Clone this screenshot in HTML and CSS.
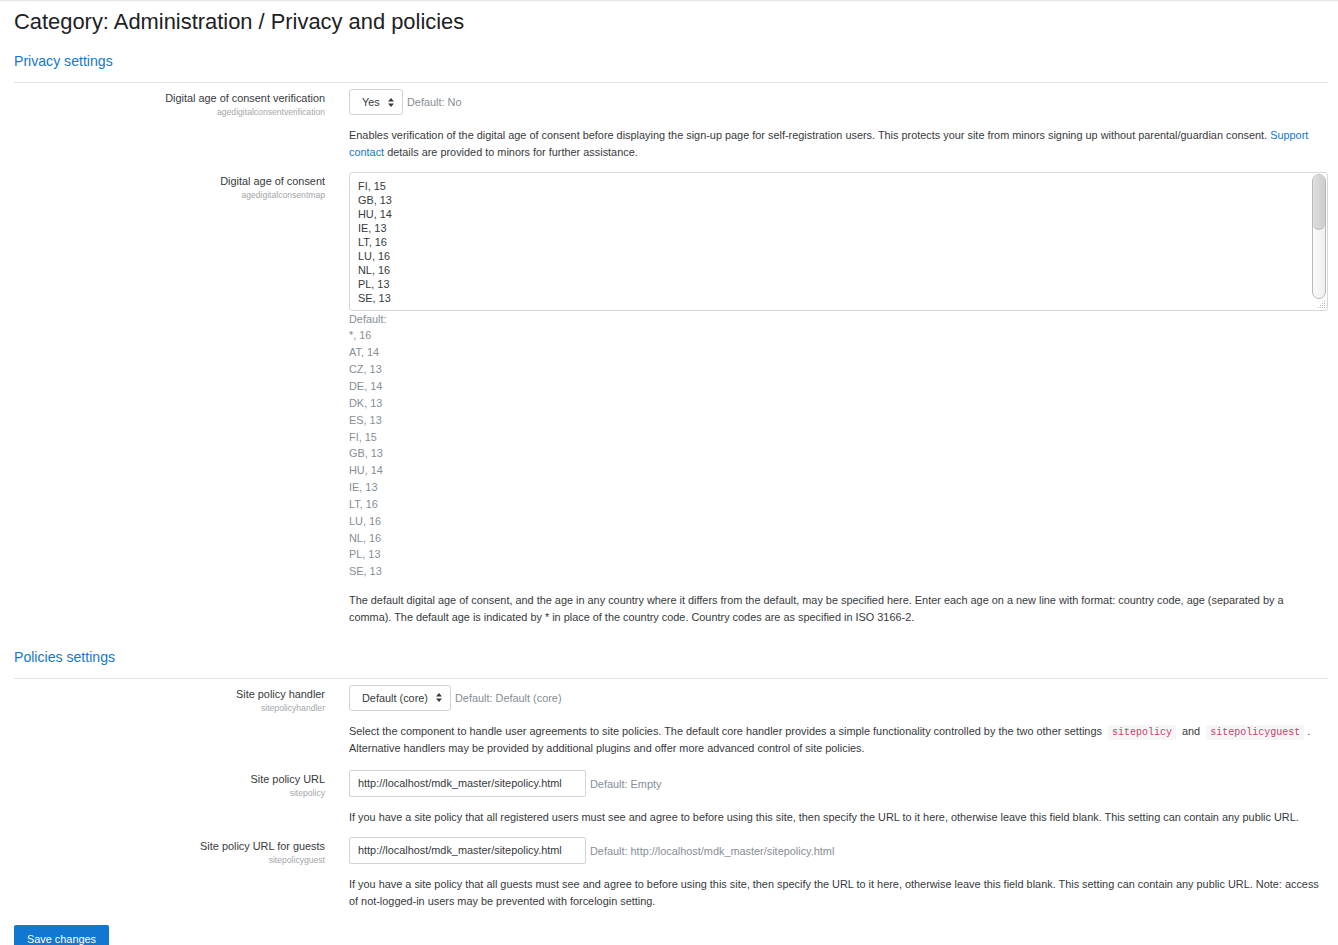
FILE: index.html
```html
<!DOCTYPE html>
<html lang="en">
<head>
    <meta charset="UTF-8">
    <title>Category: Administration / Privacy and policies</title>
    <link rel="stylesheet" href="styles.css">
</head>
<body>
    <div class="page">
        <h2 class="page-title">Category: Administration / Privacy and policies</h2>

        <section class="settings-group">
            <h3 class="group-title">Privacy settings</h3>

            <div class="setting">
                <div class="setting-label">
                    <label>Digital age of consent verification</label>
                    <span class="setting-name">agedigitalconsentverification</span>
                </div>
                <div class="setting-control">
                    <div class="control-line">
                        <div class="select select-yes">Yes
                            <svg class="caret" width="6" height="9" viewBox="0 0 6 9"><path d="M3 0 L6 3.5 H0 Z M3 9 L0 5.5 H6 Z" fill="#373a3c"/></svg>
                        </div>
                        <span class="default">Default: No</span>
                    </div>
                    <p class="description">Enables verification of the digital age of consent before displaying the sign-up page for self-registration users. This protects your site from minors signing up without parental/guardian consent. <a href="#">Support contact</a> details are provided to minors for further assistance.</p>
                </div>
            </div>

            <div class="setting">
                <div class="setting-label">
                    <label>Digital age of consent</label>
                    <span class="setting-name">agedigitalconsentmap</span>
                </div>
                <div class="setting-control">
                    <div class="textarea">
                        <div class="textarea-lines">FI, 15<br>GB, 13<br>HU, 14<br>IE, 13<br>LT, 16<br>LU, 16<br>NL, 16<br>PL, 13<br>SE, 13</div>
                        <div class="fake-scroll"><div class="fake-thumb"></div></div>
                        <svg class="grip" width="8" height="8" viewBox="0 0 8 8"><g fill="#bbb"><rect x="6" y="0" width="1" height="1"/><rect x="4" y="2" width="1" height="1"/><rect x="6" y="2" width="1" height="1"/><rect x="2" y="4" width="1" height="1"/><rect x="4" y="4" width="1" height="1"/><rect x="6" y="4" width="1" height="1"/><rect x="0" y="6" width="1" height="1"/><rect x="2" y="6" width="1" height="1"/><rect x="4" y="6" width="1" height="1"/><rect x="6" y="6" width="1" height="1"/></g></svg>
                    </div>
                    <div class="default default-list">Default:<br>*, 16<br>AT, 14<br>CZ, 13<br>DE, 14<br>DK, 13<br>ES, 13<br>FI, 15<br>GB, 13<br>HU, 14<br>IE, 13<br>LT, 16<br>LU, 16<br>NL, 16<br>PL, 13<br>SE, 13</div>
                    <p class="description">The default digital age of consent, and the age in any country where it differs from the default, may be specified here. Enter each age on a new line with format: country code, age (separated by a comma). The default age is indicated by * in place of the country code. Country codes are as specified in ISO 3166-2.</p>
                </div>
            </div>
        </section>

        <section class="settings-group">
            <h3 class="group-title">Policies settings</h3>

            <div class="setting">
                <div class="setting-label">
                    <label>Site policy handler</label>
                    <span class="setting-name">sitepolicyhandler</span>
                </div>
                <div class="setting-control">
                    <div class="control-line">
                        <div class="select select-core">Default (core)
                            <svg class="caret" width="6" height="9" viewBox="0 0 6 9"><path d="M3 0 L6 3.5 H0 Z M3 9 L0 5.5 H6 Z" fill="#373a3c"/></svg>
                        </div>
                        <span class="default">Default: Default (core)</span>
                    </div>
                    <p class="description">Select the component to handle user agreements to site policies. The default core handler provides a simple functionality controlled by the two other settings <code>sitepolicy</code> and <code>sitepolicyguest</code>. Alternative handlers may be provided by additional plugins and offer more advanced control of site policies.</p>
                </div>
            </div>

            <div class="setting setting-after-code">
                <div class="setting-label">
                    <label>Site policy URL</label>
                    <span class="setting-name">sitepolicy</span>
                </div>
                <div class="setting-control">
                    <div class="control-line">
                        <div class="input">http://localhost/mdk_master/sitepolicy.html</div>
                        <span class="default">Default: Empty</span>
                    </div>
                    <p class="description">If you have a site policy that all registered users must see and agree to before using this site, then specify the URL to it here, otherwise leave this field blank. This setting can contain any public URL.</p>
                </div>
            </div>

            <div class="setting">
                <div class="setting-label">
                    <label>Site policy URL for guests</label>
                    <span class="setting-name">sitepolicyguest</span>
                </div>
                <div class="setting-control">
                    <div class="control-line">
                        <div class="input">http://localhost/mdk_master/sitepolicy.html</div>
                        <span class="default">Default: http://localhost/mdk_master/sitepolicy.html</span>
                    </div>
                    <p class="description">If you have a site policy that all guests must see and agree to before using this site, then specify the URL to it here, otherwise leave this field blank. This setting can contain any public URL. Note: access of not-logged-in users may be prevented with forcelogin setting.</p>
                </div>
            </div>
        </section>

        <button class="save-button" type="submit">Save changes</button>
    </div>
</body>
</html>
```

FILE: styles.css
```css
body {
    font-family: "Liberation Sans", Arial, sans-serif;
    font-size: 10.9px;
    color: #373a3c;
    background-color: #fff;
    margin: 0;
    border-top: 1px solid #e5e5e5;
}
.page {
    padding: 0 10px 0 14px;
}
.page-title {
    font-size: 21.9px;
    font-weight: normal;
    color: #1d2125;
    line-height: 28px;
    margin: 7px 0 0;
}
.group-title {
    font-size: 14.1px;
    font-weight: normal;
    color: #1177d1;
    line-height: 20px;
    margin: 15px 0 0;
    padding-bottom: 11px;
    border-bottom: 1px solid #e3e3e3;
}
.settings-group + .settings-group .group-title {
    margin-top: 21px;
}
.setting {
    display: grid;
    grid-template-columns: 311px 1fr;
    column-gap: 24px;
    margin-top: 6px;
}
.setting + .setting {
    margin-top: 11px;
}
.setting + .setting-after-code {
    margin-top: 14px;
}
.setting-label {
    text-align: right;
    padding-top: 2px;
}
.setting-label label {
    display: block;
    line-height: 15px;
}
.setting-name {
    display: block;
    font-size: 8.6px;
    color: #a3a7ab;
    line-height: 13px;
}
.control-line {
    display: flex;
    align-items: center;
    gap: 4px;
}
.select {
    display: flex;
    align-items: center;
    justify-content: space-between;
    height: 24px;
    padding: 0 8px 0 12px;
    border: 1px solid #ced4da;
    border-radius: 3px;
    box-sizing: content-box;
}
.select-yes {
    width: 32px;
}
.select-core {
    width: 80px;
}
.input {
    width: 219px;
    height: 25px;
    line-height: 25px;
    padding: 0 8px;
    border: 1px solid #ced4da;
    border-radius: 2px;
}
.default {
    color: #868e96;
}
.description {
    margin: 12px 0 0;
    line-height: 16.8px;
    padding-right: 8px;
}
.description a {
    color: #1177d1;
    text-decoration: none;
}
code {
    font-family: "Liberation Mono", "DejaVu Sans Mono", monospace;
    font-size: 10px;
    line-height: 14px;
    color: #c9405d;
    background-color: #f6f6f8;
    border-radius: 3px;
    padding: 2px 4px;
    margin: 0 3px;
}
.textarea {
    position: relative;
    height: 137px;
    border: 1px solid #d5d8db;
    border-radius: 3px;
}
.textarea-lines {
    padding: 6px 8px 0;
    line-height: 14px;
}
.fake-scroll {
    position: absolute;
    top: 1px;
    right: 1px;
    width: 12px;
    height: 123px;
    border: 1px solid #b9b9b9;
    border-radius: 7px;
    background: linear-gradient(to right, #fafafa, #efefef);
    overflow: hidden;
}
.fake-thumb {
    height: 54px;
    background: linear-gradient(to right, #dedede, #cdcdcd);
    border-bottom: 1px solid #bcbcbc;
    border-radius: 6px 6px 7px 7px;
}
.grip {
    position: absolute;
    right: 1px;
    bottom: 1px;
}
.default-list {
    margin-top: 0;
    line-height: 16.85px;
}
.save-button {
    margin-top: 15px;
    background-color: #1177d1;
    color: #fff;
    border: none;
    border-radius: 2px;
    padding: 7px 13px;
    font-family: "Liberation Sans", Arial, sans-serif;
    font-size: 10.9px;
    line-height: 14px;
}
```
